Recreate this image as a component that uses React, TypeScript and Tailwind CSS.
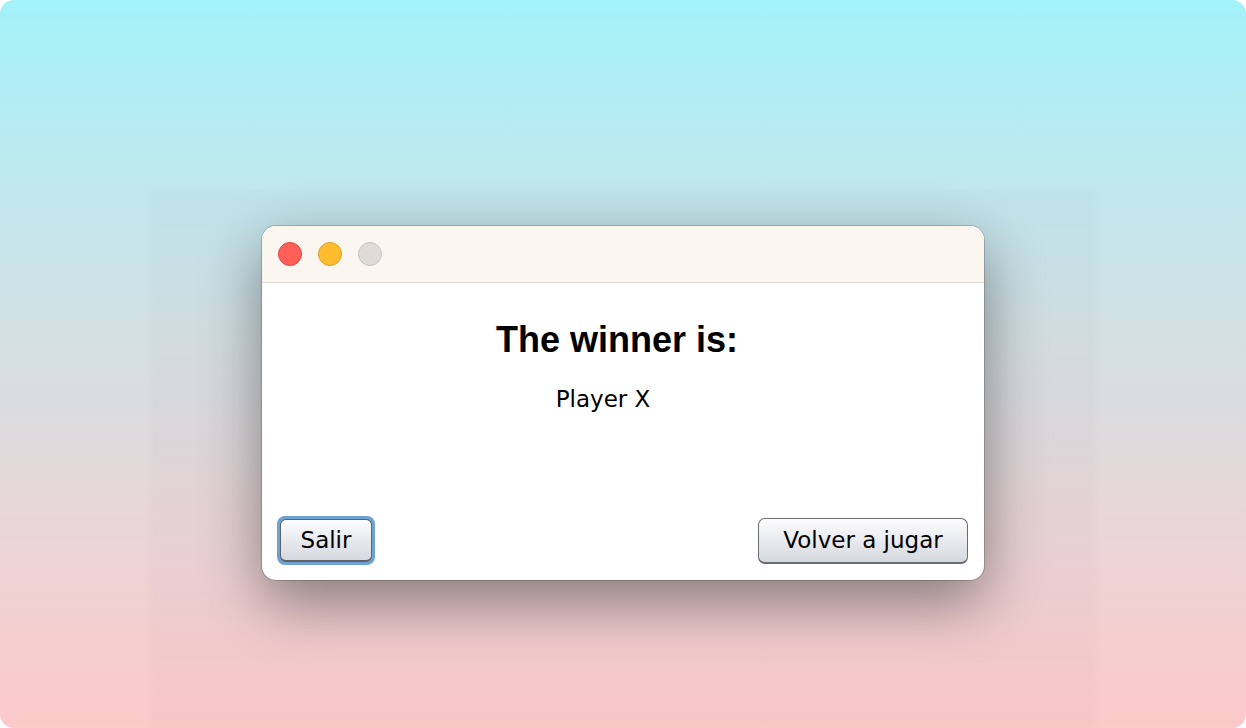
import React from "react";

export default function App() {
  return (
    <div className="w-[1246px] h-[728px] bg-white">
      <div className="relative w-full h-full rounded-[14px] overflow-hidden bg-gradient-to-b from-[#a3f2fa] via-[#d7dfe2] to-[#fdc9c9] flex justify-center pt-[226px]">
        <div className="absolute left-[150px] right-[150px] top-[190px] bottom-0 bg-[rgba(80,60,70,0.025)] blur-[2px]" />
        <div className="relative w-[722px] h-[354px] rounded-[14px] bg-white overflow-hidden shadow-[0_22px_60px_rgba(0,0,0,0.42),0_0_0_1px_rgba(0,0,0,0.18)] flex flex-col">
          <div className="h-[57px] bg-[#fbf7f0] border-b border-[#dcdad6] flex items-center gap-4 pl-4">
            <div className="w-6 h-6 rounded-full bg-[#ff5f57] border border-[#e2463f]" />
            <div className="w-6 h-6 rounded-full bg-[#febc2e] border border-[#dea123]" />
            <div className="w-6 h-6 rounded-full bg-[#dfdcd7] border border-[#c6c3be]" />
          </div>
          <div className="flex-1 flex flex-col">
            <div className="flex justify-center pt-[37px] pr-[12px]">
              <h1 className="text-[36px] leading-[40px] font-bold text-black font-['Liberation_Sans',Arial,sans-serif]">
                The winner is:
              </h1>
            </div>
            <div className="flex justify-center pt-[25px] pr-[40px]">
              <span className="text-[23px] leading-[28px] text-black font-['DejaVu_Sans',sans-serif]">
                Player X
              </span>
            </div>
            <div className="flex-1" />
            <div className="flex justify-between items-center pl-[15px] pr-[16px] pb-[15px]">
              <div className="shrink-0 rounded-[8px] p-[3px] bg-[#6ea2d2]">
                <button className="w-[92px] h-[43px] rounded-[6px] border border-[#5f6166] border-b-[2px] bg-gradient-to-b from-[#fdfdfe] to-[#d5d8df] text-[23px] text-black font-['DejaVu_Sans',sans-serif] flex items-center justify-center">
                  Salir
                </button>
              </div>
              <button className="shrink-0 w-[210px] h-[46px] rounded-[7px] border border-[#6a6c71] border-b-[2px] bg-gradient-to-b from-[#fdfdfe] to-[#d5d8df] text-[23px] text-black font-['DejaVu_Sans',sans-serif] flex items-center justify-center">
                Volver a jugar
              </button>
            </div>
          </div>
        </div>
      </div>
    </div>
  );
}
